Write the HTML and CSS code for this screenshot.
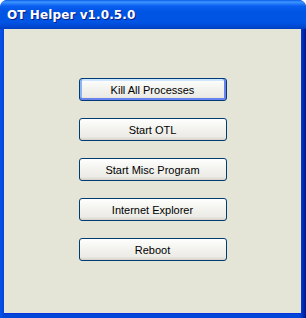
FILE: index.html
```html
<!DOCTYPE html>
<html lang="en">
<head>
    <meta charset="UTF-8">
    <title>OT Helper v1.0.5.0</title>
    <link rel="stylesheet" href="styles.css">
</head>
<body>
    <!-- window frame -->
    <div class="window">
        <div class="titlebar">
            <span class="title">OT Helper v1.0.5.0</span>
        </div>

        <!-- client area with the buttons -->
        <div class="client">
            <button class="btn default">Kill All Processes</button>
            <button class="btn">Start OTL</button>
            <button class="btn">Start Misc Program</button>
            <button class="btn">Internet Explorer</button>
            <button class="btn">Reboot</button>
        </div>
    </div>
</body>
</html>
```

FILE: styles.css
```css
body{
    margin: 0;
    background: #ffffff;
}

.window{
    width: 306px;
    height: 318px;
    display: flex;
    flex-direction: column;
    background: linear-gradient(to right, #0a52e8 0px, #0046d8 4px, #0046d8 300px, #00138c 306px);
    border-radius: 7px 7px 0 0;
    overflow: hidden;
}

.titlebar{
    height: 29px;
    flex: none;
    display: flex;
    align-items: center;
    padding-left: 7px;
    background: linear-gradient(to bottom, #0a5ee8 0px, #3d95ff 2px, #0a5ef0 6px, #0054e3 12px, #0055e5 22px, #0046d0 27px, #003dc0 29px);
    border-radius: 7px 7px 0 0;
}

.title{
    color: #ffffff;
    font-family: "DejaVu Sans", sans-serif;
    font-weight: bold;
    font-size: 12px;
    letter-spacing: 0.1px;
    text-shadow: 1px 1px 0 #0a1e80;
    margin-top: 1px;
}

.client{
    flex: 1;
    margin: 0 5px 5px 4px;
    background: #e5e5d7;
    display: flex;
    flex-direction: column;
    align-items: center;
    gap: 17px;
    padding-top: 49px;
    box-shadow: 0 1px 0 #0831d9;
}

.btn{
    width: 148px;
    height: 23px;
    border: 1px solid #003c74;
    border-radius: 3px;
    background: linear-gradient(to bottom, #ffffff 0%, #f4f4f0 40%, #ecebe6 85%, #d6d0c5 100%);
    font-family: "Liberation Sans", sans-serif;
    font-size: 11px;
    color: #000000;
    padding: 0;
}

/* first button has the blue focus edge */
.default{
    box-shadow: inset 0 -2px 0 #6982ee, inset 2px 0 0 #8cb4f2, inset -2px 0 0 #6982ee, inset 0 2px 0 #cee7ff;
}
```
